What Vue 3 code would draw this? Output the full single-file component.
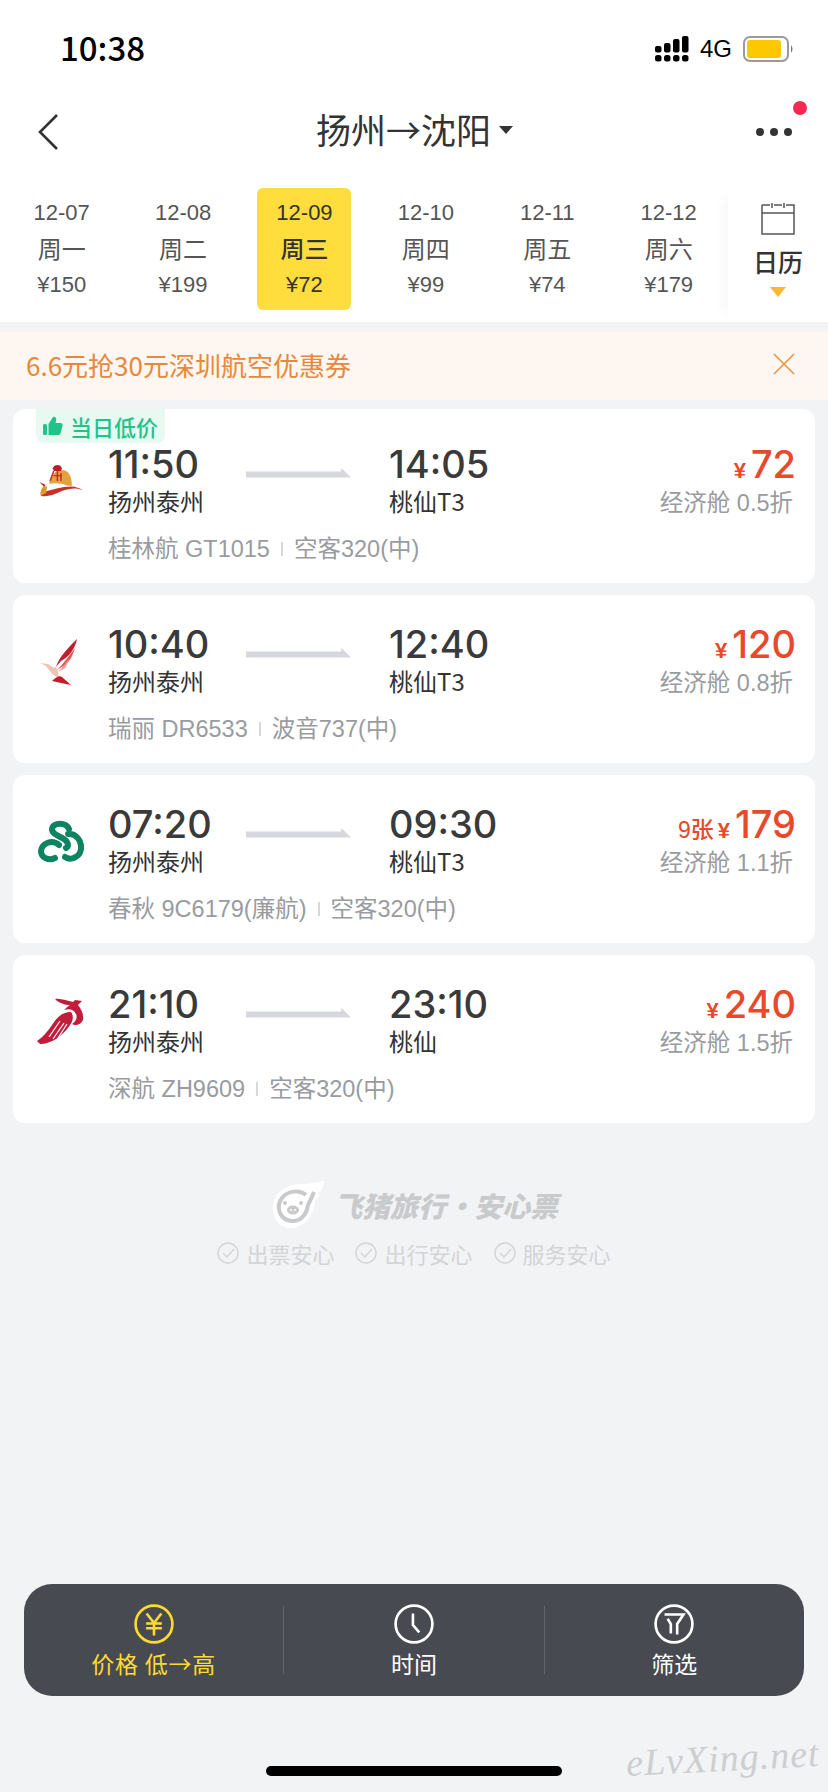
<script setup>
const dates = [
  { d: '12-07', w: '周一', p: '¥150' },
  { d: '12-08', w: '周二', p: '¥199' },
  { d: '12-09', w: '周三', p: '¥72', active: true },
  { d: '12-10', w: '周四', p: '¥99' },
  { d: '12-11', w: '周五', p: '¥74' },
  { d: '12-12', w: '周六', p: '¥179' }
]

const flights = [
  { logo: 'gt', dep: '11:50', arr: '14:05', to: '桃仙T3', air: '桂林航 GT1015', plane: '空客320(中)', price: 72, cabin: '经济舱 0.5折', low: true },
  { logo: 'dr', dep: '10:40', arr: '12:40', to: '桃仙T3', air: '瑞丽 DR6533', plane: '波音737(中)', price: 120, cabin: '经济舱 0.8折' },
  { logo: 'cq', dep: '07:20', arr: '09:30', to: '桃仙T3', air: '春秋 9C6179(廉航)', plane: '空客320(中)', price: 179, cabin: '经济舱 1.1折', left: '9张' },
  { logo: 'zh', dep: '21:10', arr: '23:10', to: '桃仙', air: '深航 ZH9609', plane: '空客320(中)', price: 240, cabin: '经济舱 1.5折' }
]

const promises = ['出票安心', '出行安心', '服务安心']
</script>

<template>
  <div class="page">
    <div class="status">
      <span class="clock">10:38</span>
      <div class="status-right">
        <svg class="signal" width="34" height="26" viewBox="0 0 34 26">
          <g fill="#000">
            <rect x="0" y="10" width="6.5" height="6.5" rx="2" />
            <rect x="9" y="7" width="6.5" height="9.5" rx="2" />
            <rect x="18" y="3" width="6.5" height="13.5" rx="2" />
            <rect x="27" y="0" width="6.5" height="16.5" rx="2" />
            <rect x="0" y="19" width="6.5" height="6.5" rx="2.5" />
            <rect x="9" y="19" width="6.5" height="6.5" rx="2.5" />
            <rect x="18" y="19" width="6.5" height="6.5" rx="2.5" />
            <rect x="27" y="19" width="6.5" height="6.5" rx="2.5" />
          </g>
        </svg>
        <span class="net">4G</span>
        <svg class="battery" width="52" height="26" viewBox="0 0 52 26">
          <rect x="1" y="1" width="44" height="24" rx="6" fill="#fff" stroke="#9a9a9a" stroke-width="2" />
          <rect x="4" y="4" width="34" height="18" rx="3" fill="#fdc800" />
          <path d="M48 9 Q51 13 48 17 Z" fill="#777" />
        </svg>
      </div>
    </div>

    <div class="nav">
      <svg class="back" width="24" height="38" viewBox="0 0 24 38">
        <path d="M20 2 L3 19 L20 36" fill="none" stroke="#333" stroke-width="2.6" />
      </svg>
      <div class="title">扬州→沈阳<i class="caret"></i></div>
      <div class="more">
        <i></i><i></i><i></i>
        <b class="red-dot"></b>
      </div>
    </div>

    <div class="dates">
      <div class="date-list">
        <div v-for="item in dates" :key="item.d" class="date" :class="{ active: item.active }">
          <span class="date-d">{{ item.d }}</span>
          <span class="date-w">{{ item.w }}</span>
          <span class="date-p">{{ item.p }}</span>
        </div>
      </div>
      <div class="calendar">
        <svg width="36" height="34" viewBox="0 0 36 34">
          <path d="M2 3 H10 M14 3 H22 M26 3 H34 V32 H2 V3 M2 11 H34 M12 1 V6 M24 1 V6" fill="none" stroke="#555" stroke-width="1.5" />
        </svg>
        <span>日历</span>
        <i class="cal-caret"></i>
      </div>
    </div>

    <div class="promo">
      <span>6.6元抢30元深圳航空优惠券</span>
      <svg width="24" height="24" viewBox="0 0 24 24">
        <path d="M2 2 L22 22 M22 2 L2 22" stroke="#e8913f" stroke-width="1.5" />
      </svg>
    </div>

    <div class="list">
      <div v-for="f in flights" :key="f.dep" class="card" :class="{ first: f.low }">
        <div v-if="f.low" class="badge">
          <svg width="20" height="20" viewBox="0 0 20 20">
            <rect x="0" y="8" width="4" height="11" rx="1.5" fill="#1fc48a" />
            <path d="M5.5 8 L10 1 C12 0 14 2 13 5 L12.5 7 H17.5 C19.5 7 20 9 19.5 10 L17.5 17.5 C17 19 16 19 15 19 H5.5 Z" fill="#1fc48a" />
          </svg>
          当日低价
        </div>
        <div class="logo">
          <svg v-if="f.logo === 'gt'" width="46" height="40" viewBox="0 0 50 44">
            <path d="M12 24 C13 14 21 8 27 9 C34 9 37 17 37 26 L32 26 C26 23 17 23 12 24 Z" fill="#e2a23c" />
            <path d="M16 7 C17 2 25 2 26 7 L25 10 H17 Z" fill="#bd1d2a" />
            <path d="M17 10 L13 21 M21 10 L21 21 M25 12 V21 M17 15 H26" stroke="#c42a2a" stroke-width="1.6" fill="none" />
            <path d="M1 22 L8 25 C6 29 5 31 6 33 C14 31 26 27 36 27 C41 27 46 29 49 31 C42 28 34 29 26 32 C18 36 8 39 3 37 C2 33 4 29 6 27 Z" fill="#c9302a" />
            <path d="M3 37 C2 33 4 29 6 27 L10 27 C9 30 9 32 9 34 Z" fill="#dc9a28" />
          </svg>
          <svg v-else-if="f.logo === 'dr'" width="44" height="50" viewBox="0 0 44 50">
            <path d="M38 2 C30 10 20 20 17 30 L22 24 C30 20 36 12 38 2 Z" fill="#bf1e2e" />
            <path d="M36 11 C30 19 24 27 18 33 L26 28 C31 24 34 18 36 11 Z" fill="#dc5a55" />
            <path d="M30 22 C26 27 22 32 19 35 L26 31 C28 28 29 25 30 22 Z" fill="#eb9a8b" />
            <path d="M1 26 L9 27 C13 30 15 31 17 30 L19 35 L20 41 C14 39 10 33 7 29 Z" fill="#f0c4b0" />
            <path d="M13 44 C17 40 21 38 23 40 L32 48 C25 47 19 45 13 44 Z" fill="#bf1e2e" />
          </svg>
          <svg v-else-if="f.logo === 'cq'" width="46" height="44" viewBox="0 0 46 44">
            <g fill="none" stroke="#0d8461" stroke-width="6" stroke-linecap="round">
              <path d="M31 9 C28 2 15 2 14 9 C14 16 25 16 29 22 C31 25 30 27 28 28" />
              <path d="M21 25 C14 19 4 23 3 31 C3 38 11 41 17 38" />
              <path d="M30 14 C38 13 44 21 43 29 C42 37 33 41 27 37" />
            </g>
          </svg>
          <svg v-else class="logo-zh" width="48" height="50" viewBox="0 0 48 50">
            <path d="M18 4 C24 3 30 6 36 7 L38 5 L45 6 L41 10 C44 14 47 19 46 25 C44 30 38 31 35 29 C38 27 41 23 39 19 C37 15 33 13 27 15 C31 11 33 10 33 10 C28 10 22 8 18 4 Z" fill="#c11d3a" />
            <path d="M34 17 C24 17 19 24 15 30 C11 36 6 42 0 46 L3 49 C14 49 26 41 33 30 C36 26 37 21 34 17 Z" fill="#c11d3a" />
            <path d="M12 42 L23 26 M16 44 L27 28 M21 43 L30 29" stroke="#fff" stroke-width="1.2" />
          </svg>
        </div>
        <div class="route">
          <div class="times">
            <div class="point">
              <div class="time">{{ f.dep }}</div>
              <div class="city">扬州泰州</div>
            </div>
            <svg class="arrow" width="105" height="10" viewBox="0 0 105 10">
              <path d="M0 3.5 H95 L95.5 0 L105 9.5 H0 Z" fill="#d6d8dd" />
            </svg>
            <div class="point">
              <div class="time">{{ f.arr }}</div>
              <div class="city">{{ f.to }}</div>
            </div>
          </div>
          <div class="meta">
            <span>{{ f.air }}</span>
            <i class="sep"></i>
            <span>{{ f.plane }}</span>
          </div>
        </div>
        <div class="fare">
          <div class="price">
            <span v-if="f.left" class="left">{{ f.left }}</span>
            <span class="yen">¥</span>
            <span class="num">{{ f.price }}</span>
          </div>
          <div class="cabin">{{ f.cabin }}</div>
        </div>
      </div>
    </div>

    <div class="assure">
      <div class="brand">
        <svg width="58" height="48" viewBox="0 0 58 48">
          <path d="M3 27 C3 11 18 3 31 3 C39 3 47 1 55 0 C53 6 51 10 48 13 L50 14 L45 20 C44 34 34 47 21 47 C10 47 3 39 3 27 Z" fill="#fff" />
          <path d="M36 14 C30 9 18 9 12 17 C5 26 10 40 23 40 C32 40 37 32 38 24 C40 20 42 16 44 11" fill="none" stroke="#c9cacc" stroke-width="4" />
          <ellipse cx="23" cy="29" rx="6" ry="4.5" fill="#c9cacc" />
          <circle cx="15" cy="22" r="2" fill="#c9cacc" />
          <circle cx="31" cy="22" r="2" fill="#c9cacc" />
          <circle cx="21" cy="29" r="1" fill="#fff" />
          <circle cx="25" cy="29" r="1" fill="#fff" />
        </svg>
        <span class="brand-text">飞猪旅行<em>·</em>安心票</span>
      </div>
      <div class="promises">
        <div v-for="p in promises" :key="p" class="promise">
          <svg width="22" height="22" viewBox="0 0 22 22">
            <circle cx="11" cy="11" r="10" fill="none" stroke="#d3d4d6" stroke-width="1.4" />
            <path d="M6 11 L10 15 L17 7" fill="none" stroke="#d3d4d6" stroke-width="1.4" />
          </svg>
          <span>{{ p }}</span>
        </div>
      </div>
    </div>

    <div class="toolbar">
      <div class="tool on">
        <svg width="40" height="40" viewBox="0 0 38 38">
          <circle cx="19" cy="19" r="17.5" fill="none" stroke="#fddb2e" stroke-width="2.5" />
          <path d="M12 9 L19 18 L26 9 M11.5 18.5 H26.5 M11.5 23 H26.5 M19 18 V30" fill="none" stroke="#fddb2e" stroke-width="2.5" />
        </svg>
        <span>价格 低→高</span>
      </div>
      <div class="tool">
        <svg width="40" height="40" viewBox="0 0 38 38">
          <circle cx="19" cy="19" r="17.5" fill="none" stroke="#fff" stroke-width="2.5" />
          <path d="M18 9 V20 L24 27" fill="none" stroke="#fff" stroke-width="2.5" />
        </svg>
        <span>时间</span>
      </div>
      <div class="tool">
        <svg width="40" height="40" viewBox="0 0 38 38">
          <circle cx="19" cy="19" r="17.5" fill="none" stroke="#fff" stroke-width="2.5" />
          <path d="M10 10 H28 L22 19 V29 M16 28 V19 L13 14" fill="none" stroke="#fff" stroke-width="2.5" />
        </svg>
        <span>筛选</span>
      </div>
    </div>

    <div class="home-bar"></div>
    <div class="watermark">eLvXing.net</div>
  </div>
</template>

<style>
html,
body {
  margin: 0;
  background: #f2f3f5;
}
</style>

<style scoped>
.page {
  position: relative;
  width: 828px;
  height: 1792px;
  display: flex;
  flex-direction: column;
  overflow: hidden;
  background: #f2f3f5;
  font-family: "Liberation Sans", "Noto Sans CJK SC", sans-serif;
  color: #333;
}

.status {
  height: 98px;
  box-sizing: border-box;
  padding: 0 33px 0 60px;
  background: #fff;
  display: flex;
  justify-content: space-between;
  align-items: center;
}

.clock {
  margin-top: -4px;
  font-family: "Noto Sans CJK SC", sans-serif;
  font-size: 33px;
  font-weight: 500;
  color: #000;
}

.status-right {
  display: flex;
  align-items: center;
}

.net {
  margin: 0 11px;
  font-size: 24px;
  color: #000;
}

.nav {
  position: relative;
  height: 90px;
  box-sizing: border-box;
  padding-bottom: 30px;
  background: #fff;
  display: flex;
  align-items: center;
  justify-content: center;
}

.back {
  position: absolute;
  left: 37px;
  top: 15px;
}

.title {
  display: flex;
  align-items: center;
  margin-left: 1px;
  font-family: "Noto Sans CJK SC", sans-serif;
  font-size: 35px;
  color: #333;
}

.caret {
  margin: 4px 0 0 8px;
  border-left: 7px solid transparent;
  border-right: 7px solid transparent;
  border-top: 8px solid #333;
}

.more {
  position: absolute;
  right: 36px;
  top: 30px;
  display: flex;
  gap: 6px;
}

.more i {
  width: 8px;
  height: 8px;
  border-radius: 50%;
  background: #333;
}

.red-dot {
  position: absolute;
  right: -15px;
  top: -27px;
  width: 14px;
  height: 14px;
  border-radius: 50%;
  background: #f5294f;
}

.dates {
  height: 134px;
  background: #fff;
  display: flex;
}

.date-list {
  width: 728px;
  box-sizing: border-box;
  padding-left: 1px;
  display: grid;
  grid-template-columns: repeat(6, 121.4px);
}

.date {
  width: 94px;
  height: 122px;
  justify-self: center;
  border-radius: 6px;
  display: flex;
  flex-direction: column;
  align-items: center;
  color: #555;
}

.date.active {
  background: #ffdd3c;
  color: #333;
}

.date-d {
  margin-top: 9px;
  font-size: 22px;
  line-height: 32px;
}

.date-w {
  margin-top: 3px;
  font-family: "Noto Sans CJK SC", sans-serif;
  font-size: 24px;
  line-height: 32px;
}

.date-p {
  margin-top: 5px;
  font-size: 22px;
  line-height: 32px;
}

.date.active .date-w,
.date.active .date-p {
  font-weight: 500;
}

.calendar {
  flex: 1;
  display: flex;
  flex-direction: column;
  align-items: center;
  padding-top: 14px;
  box-shadow: -14px 0 14px -10px rgba(0, 0, 0, 0.04);
}

.calendar span {
  margin-top: 8px;
  font-family: "Noto Sans CJK SC", sans-serif;
  font-size: 25px;
  line-height: 34px;
  font-weight: 500;
}

.cal-caret {
  margin-top: 9px;
  border-left: 8px solid transparent;
  border-right: 8px solid transparent;
  border-top: 10px solid #fbb72e;
}

.promo {
  height: 68px;
  box-sizing: border-box;
  margin-top: 10px;
  padding: 0 32px 4px 26px;
  background: #fef6f0;
  display: flex;
  align-items: center;
  justify-content: space-between;
  font-family: "Noto Sans CJK SC", sans-serif;
  font-size: 26px;
  color: #e8883a;
}

.list {
  margin-top: 9px;
  padding: 0 13px;
  display: flex;
  flex-direction: column;
  gap: 12px;
}

.card {
  position: relative;
  height: 168px;
  box-sizing: border-box;
  padding: 25px 19px 0 0;
  background: #fff;
  border-radius: 12px;
  display: flex;
}

.card.first {
  height: 174px;
  padding-top: 31px;
}

.badge {
  position: absolute;
  left: 23px;
  top: 0;
  height: 34px;
  padding: 0 7px;
  box-sizing: border-box;
  background: #e8f9f2;
  border-radius: 0 0 8px 8px;
  display: flex;
  align-items: center;
  gap: 7px;
  font-family: "Noto Sans CJK SC", sans-serif;
  font-size: 22px;
  font-weight: 500;
  color: #1fc48a;
}

.logo {
  width: 95px;
  height: 70px;
  margin-top: 7px;
  flex: none;
  display: flex;
  align-items: center;
  justify-content: center;
}

.logo-zh {
  margin-top: -4px;
}

.route {
  flex: 1;
}

.times {
  display: flex;
  align-items: flex-start;
}

.point {
  width: 138px;
}

.point + .arrow + .point {
  margin-left: 38px;
}

.time {
  padding-top: 4px;
  font-family: "Inter", sans-serif;
  font-size: 38px;
  font-weight: 500;
  line-height: 40px;
  color: #3a3a3a;
}

.city {
  font-family: "Noto Sans CJK SC", sans-serif;
  font-size: 24px;
  line-height: 34px;
  color: #333;
}

.arrow {
  margin-top: 28px;
}

.meta {
  margin-top: 14px;
  display: flex;
  align-items: center;
  font-size: 23.5px;
  line-height: 34px;
  color: #999b9f;
}

.sep {
  width: 2px;
  height: 14px;
  margin: 0 11px;
  background: #d8d8da;
}

.fare {
  margin-top: 2px;
  display: flex;
  flex-direction: column;
  align-items: flex-end;
}

.price {
  display: flex;
  align-items: baseline;
  height: 44px;
  color: #e8492a;
}

.left {
  font-size: 23px;
  font-weight: 500;
  margin-right: 4px;
}

.yen {
  font-size: 22px;
  font-weight: 700;
  margin-right: 5px;
}

.num {
  font-family: "Inter", sans-serif;
  font-size: 38px;
  font-weight: 500;
  line-height: 44px;
}

.cabin {
  margin-right: 3px;
  font-size: 23.5px;
  line-height: 34px;
  color: #999b9f;
}

.assure {
  margin-top: 58px;
  display: flex;
  flex-direction: column;
  align-items: center;
}

.brand {
  display: flex;
  align-items: center;
  gap: 6px;
  height: 48px;
}

.brand-text {
  font-family: "Noto Sans CJK SC", sans-serif;
  font-size: 28px;
  font-weight: 900;
  font-style: italic;
  color: #c9cacc;
}

.brand-text em {
  margin: 0;
}

.promises {
  margin-top: 9px;
  display: flex;
  gap: 21px;
}

.promise {
  display: flex;
  align-items: center;
  gap: 7px;
  font-family: "Noto Sans CJK SC", sans-serif;
  font-size: 22px;
  line-height: 30px;
  color: #d3d4d6;
}

.toolbar {
  position: absolute;
  left: 24px;
  bottom: 96px;
  width: 780px;
  height: 112px;
  background: #484a52;
  border-radius: 28px;
  display: flex;
  align-items: center;
}

.tool {
  flex: 1;
  height: 68px;
  box-sizing: border-box;
  padding-top: 4px;
  display: flex;
  flex-direction: column;
  align-items: center;
  justify-content: center;
  font-family: "Noto Sans CJK SC", sans-serif;
  font-size: 23px;
  line-height: 34px;
  color: #fff;
}

.tool + .tool {
  border-left: 1px solid #63656c;
}

.tool.on {
  color: #fddb2e;
  letter-spacing: 0.8px;
}

.tool svg {
  flex: none;
}

.tool span {
  margin-top: 2px;
}

.home-bar {
  position: absolute;
  left: 266px;
  bottom: 16px;
  width: 296px;
  height: 10px;
  border-radius: 5px;
  background: #000;
}

.watermark {
  position: absolute;
  right: 8px;
  bottom: 12px;
  font-family: "Liberation Serif", serif;
  font-style: italic;
  font-size: 38px;
  letter-spacing: 1px;
  color: #cdcecf;
  transform: rotate(-3deg);
}
</style>
